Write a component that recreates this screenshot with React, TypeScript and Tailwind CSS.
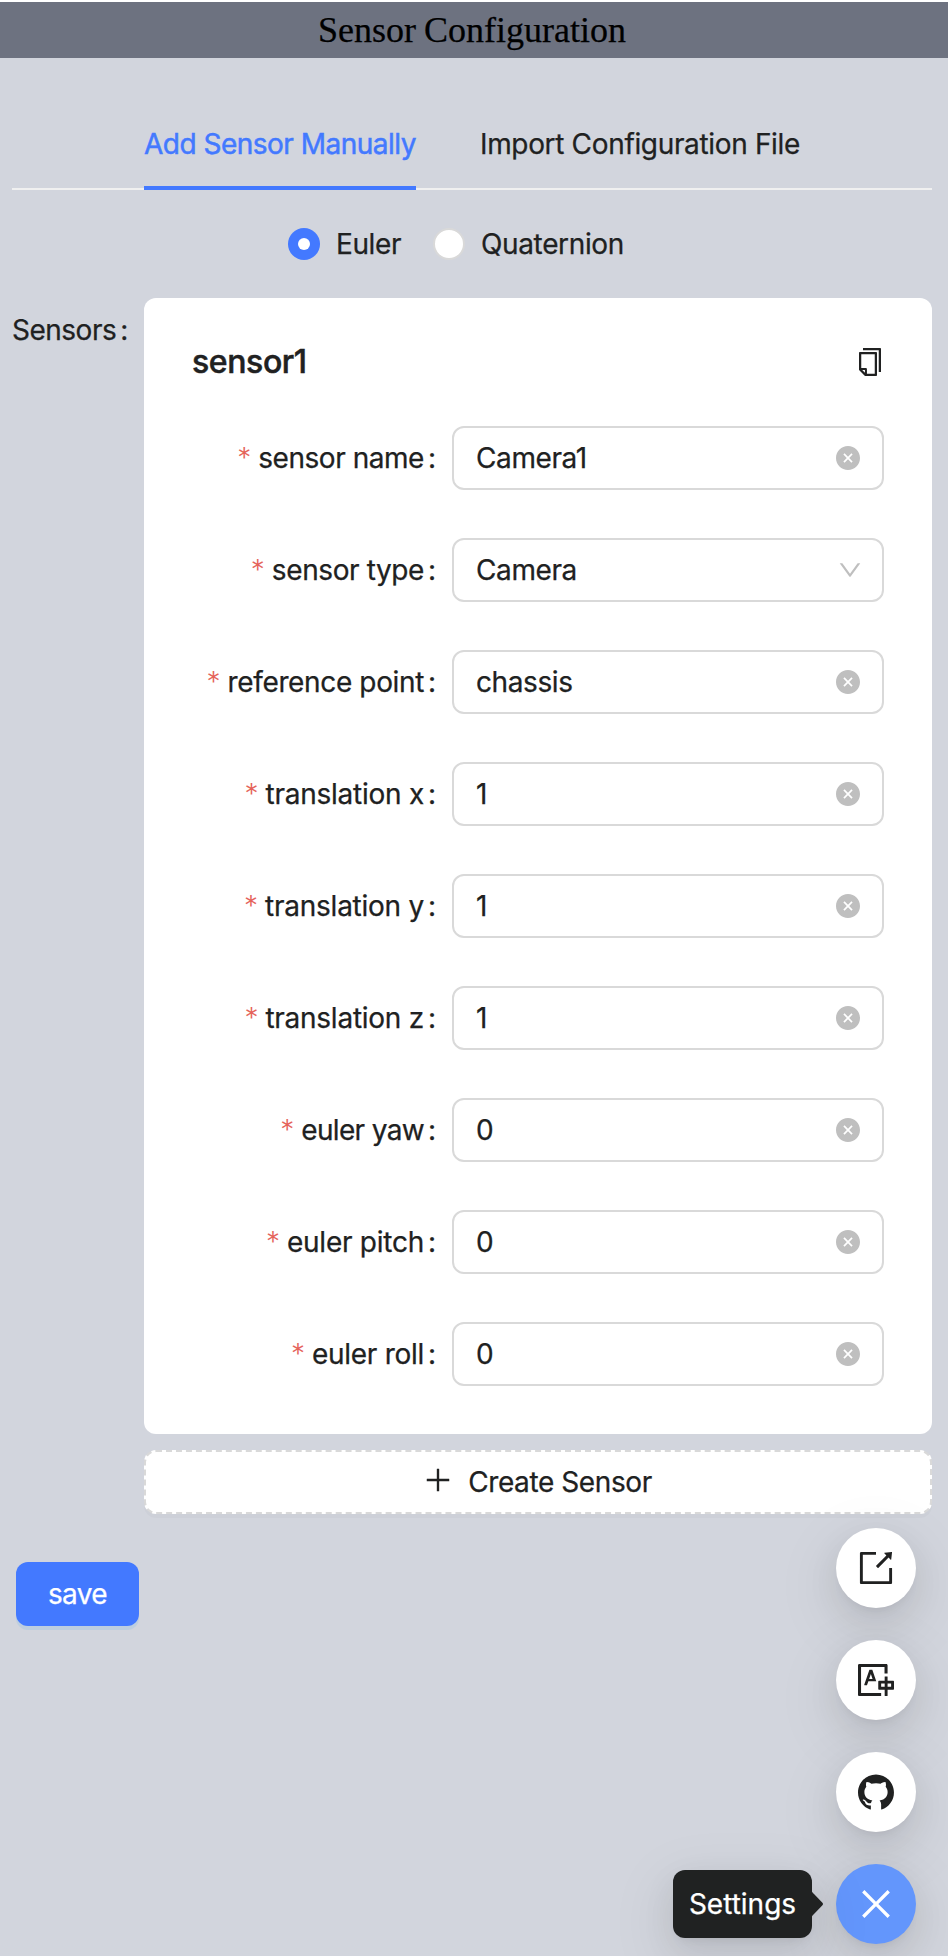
import React from "react";
import {
  AiFillCloseCircle,
  AiFillGithub,
  AiOutlineClose,
  AiOutlineCopy,
  AiOutlineDown,
  AiOutlineExport,
  AiOutlinePlus,
  AiOutlineTranslation,
} from "react-icons/ai";

const VIEW = "64 64 896 896";

type Field = { label: string; tracking: string; value: string; select?: boolean };

const fields: Field[] = [
  { label: "sensor name", tracking: "tracking-[-0.45px]", value: "Camera1" },
  { label: "sensor type", tracking: "tracking-[-0.4px]", value: "Camera", select: true },
  { label: "reference point", tracking: "tracking-[-0.36px]", value: "chassis" },
  { label: "translation x", tracking: "tracking-[-0.25px]", value: "1" },
  { label: "translation y", tracking: "tracking-[-0.25px]", value: "1" },
  { label: "translation z", tracking: "tracking-[-0.25px]", value: "1" },
  { label: "euler yaw", tracking: "tracking-[-0.65px]", value: "0" },
  { label: "euler pitch", tracking: "tracking-[-0.25px]", value: "0" },
  { label: "euler roll", tracking: "tracking-[-0.28px]", value: "0" },
];

function Colon() {
  return <span className="ml-1 mr-4 w-2 text-center">:</span>;
}

function FieldRow({ field }: { field: Field }) {
  return (
    <div className="flex h-16 items-center">
      <div className="flex w-[260px] shrink-0 items-center justify-end whitespace-nowrap">
        <span className="mr-[7px] w-3.5 text-center font-light text-[#e5635a] [-webkit-text-stroke:0]">*</span>
        <span className={field.tracking}>{field.label}</span>
        <Colon />
      </div>
      <div className="flex h-16 flex-1 items-center justify-between rounded-xl border-2 border-[#d9d9d9] bg-white px-[22px]">
        <span className="tracking-[-0.4px]">{field.value}</span>
        {field.select ? (
          <AiOutlineDown viewBox={VIEW} size={24} className="-mr-0.5 text-[#bfbfbf]" />
        ) : (
          <AiFillCloseCircle viewBox={VIEW} size={24} className="text-[#bfbfbf]" />
        )}
      </div>
    </div>
  );
}

function FloatButton({ children }: { children: React.ReactNode }) {
  return (
    <button className="flex size-20 items-center justify-center rounded-full bg-white shadow-[0_12px_32px_0_rgba(0,0,0,0.08),0_6px_12px_-8px_rgba(0,0,0,0.12),0_18px_56px_16px_rgba(0,0,0,0.05)]">
      {children}
    </button>
  );
}

export default function App() {
  return (
    <div className="relative h-[1956px] w-[948px] overflow-hidden bg-[#d2d5dd] font-['Inter',sans-serif] text-[28px] leading-[44px] text-[#202121] [-webkit-text-stroke:0.25px_currentColor]">
      <header className="h-[58px] border-t-2 border-white bg-[#6d7280] pr-1 text-center font-['Liberation_Serif',serif] text-[36px] leading-[56px] text-black [word-spacing:-1px]">
        Sensor Configuration
      </header>

      <main className="pl-3 pr-4 pt-10">
        <nav className="flex h-[92px] justify-center gap-16 border-b-2 border-[#f0f0f0]">
          <button className="-mb-0.5 h-[92px] w-[272px] whitespace-nowrap border-b-4 border-[#4379ff] pt-1 tracking-[-0.51px] text-[#4379ff] [-webkit-text-stroke:0.5px_#4379ff]">
            Add Sensor Manually
          </button>
          <button className="-mb-0.5 h-[92px] w-[320px] whitespace-nowrap tracking-[-0.34px]">
            Import Configuration File
          </button>
        </nav>

        <div className="mt-8 flex h-11 items-center pl-[276px]">
          <span className="flex size-8 items-center justify-center rounded-full bg-[#4379ff]">
            <span className="size-3 rounded-full bg-white" />
          </span>
          <span className="ml-4 w-[66px] tracking-[-0.4px]">Euler</span>
          <span className="ml-[31px] size-8 rounded-full border-2 border-[#d9d9d9] bg-white" />
          <span className="ml-4 tracking-[-0.36px]">Quaternion</span>
        </div>

        <section className="mt-8 flex">
          <div className="flex h-16 w-[132px] shrink-0 items-center tracking-[-0.5px]">
            <span className="w-[104px]">Sensors</span>
            <Colon />
          </div>
          <div className="flex-1">
            <div className="h-[1136px] rounded-xl bg-white px-12 pt-[42px]">
              <div className="flex h-11 items-center justify-between">
                <h2 className="text-[32px] font-medium tracking-[-0.4px] [-webkit-text-stroke:0.5px_currentColor]">
                  sensor1
                </h2>
                <AiOutlineCopy viewBox={VIEW} size={28} />
              </div>
              <div className="mt-[42px] flex flex-col gap-12">
                {fields.map((f) => (
                  <FieldRow key={f.label} field={f} />
                ))}
              </div>
            </div>
            <button className="mt-4 flex h-16 w-full items-center justify-center gap-4 rounded-xl border-2 border-dashed border-[#d9d9d9] bg-white shadow-[0_4px_0_rgba(0,0,0,0.02)]">
              <AiOutlinePlus viewBox={VIEW} size={28} className="-mt-1" />
              <span className="tracking-[-0.4px]">Create Sensor</span>
            </button>
          </div>
        </section>

        <button className="ml-1 mt-12 h-16 w-[123px] rounded-xl bg-[#4379ff] tracking-[-0.6px] text-white shadow-[0_4px_0_rgba(5,145,255,0.1)]">
          save
        </button>
      </main>

      <div className="absolute bottom-3 right-8 flex flex-col gap-8">
        <FloatButton>
          <AiOutlineExport viewBox={VIEW} size={36} />
        </FloatButton>
        <FloatButton>
          <AiOutlineTranslation viewBox={VIEW} size={36} />
        </FloatButton>
        <FloatButton>
          <AiFillGithub viewBox={VIEW} size={36} />
        </FloatButton>
        <button className="flex size-20 items-center justify-center rounded-full bg-[#6396fc] text-white shadow-[0_12px_32px_0_rgba(0,0,0,0.08),0_6px_12px_-8px_rgba(0,0,0,0.12),0_18px_56px_16px_rgba(0,0,0,0.05)]">
          <AiOutlineClose viewBox={VIEW} size={36} />
        </button>
      </div>

      <div className="absolute bottom-[18px] right-[136px] flex h-[68px] w-[139px] items-center justify-center rounded-xl bg-[#202222] text-white shadow-[0_12px_32px_0_rgba(0,0,0,0.08),0_6px_12px_-8px_rgba(0,0,0,0.12),0_18px_56px_16px_rgba(0,0,0,0.05)]">
        <span>Settings</span>
        <svg className="absolute left-full top-[20px]" width="12" height="28" viewBox="0 0 12 28" fill="#202222">
          <path d="M-1 0C0 2 1 3 2 4L10.2 12.4Q11.8 14 10.2 15.600L2 24C1 25 0 26 -1 28Z" />
        </svg>
      </div>
    </div>
  );
}
